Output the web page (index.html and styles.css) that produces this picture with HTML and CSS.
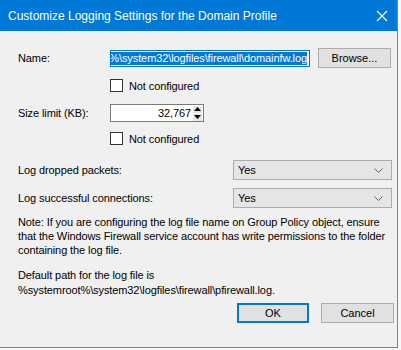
FILE: index.html
```html
<!DOCTYPE html>
<html lang="en">
<head>
    <meta charset="UTF-8">
    <meta name="viewport" content="width=device-width, initial-scale=1.0">
    <title>Customize Logging Settings</title>
    <link rel="stylesheet" href="styles.css">
</head>
<body>
    <div class="janela">
        <header class="titulo">
            <span>Customize Logging Settings for the Domain Profile</span>
            <svg class="fechar" width="12" height="12" viewBox="0 0 12 12">
                <path d="M1 1L11 11M11 1L1 11" stroke="#fff" stroke-width="1.2" fill="none"/>
            </svg>
        </header>
        <main class="conteudo">
            <div class="linha linha-nome">
                <label class="rotulo">Name:</label>
                <div class="caixa-texto focada">
                    <span class="selecao">%systemroot%\system32\logfiles\firewall\domainfw.log</span>
                </div>
                <button class="botao botao-procurar">Browse...</button>
            </div>
            <label class="marcar"><span class="quadrado"></span>Not configured</label>

            <div class="linha linha-tamanho">
                <label class="rotulo">Size limit (KB):</label>
                <div class="caixa-texto spin">
                    <span class="valor">32,767</span>
                    <div class="setas">
                        <span class="seta"><svg width="7" height="4" viewBox="0 0 7 4"><path d="M0 4L3.5 0L7 4Z" fill="#000"/></svg></span>
                        <span class="seta"><svg width="7" height="4" viewBox="0 0 7 4"><path d="M0 0L3.5 4L7 0Z" fill="#000"/></svg></span>
                    </div>
                </div>
            </div>
            <label class="marcar marcar-2"><span class="quadrado"></span>Not configured</label>

            <div class="linha linha-combo">
                <label class="rotulo rotulo-largo">Log dropped packets:</label>
                <div class="combo">Yes
                    <svg class="chevron" width="9" height="5" viewBox="0 0 9 5"><path d="M0.5 0.5L4.5 4.5L8.5 0.5" stroke="#666" fill="none"/></svg>
                </div>
            </div>
            <div class="linha linha-combo linha-combo-2">
                <label class="rotulo rotulo-largo">Log successful connections:</label>
                <div class="combo">Yes
                    <svg class="chevron" width="9" height="5" viewBox="0 0 9 5"><path d="M0.5 0.5L4.5 4.5L8.5 0.5" stroke="#666" fill="none"/></svg>
                </div>
            </div>

            <p class="nota">Note: If you are configuring the log file name on Group Policy object, ensure<br>that the Windows Firewall service account has write permissions to the folder<br>containing the log file.</p>
            <p class="nota nota-2">Default path for the log file is<br>%systemroot%\system32\logfiles\firewall\pfirewall.log.</p>

            <div class="acoes">
                <button class="botao botao-ok">OK</button>
                <button class="botao">Cancel</button>
            </div>
        </main>
    </div>
</body>
</html>
```

FILE: styles.css
```css
*{
    margin: 0;
    box-sizing: border-box;
}
:root{
    --azul:#0078d7;
    --fundo:#f0f0f0;
    --borda:#adadad;
}
body{
    background-color: #f7f7f7;
    font-family: "Liberation Sans", Arial, sans-serif;
    font-size: 12px;
    color: #000;
}
.janela{
    width: 398px;
    height: 348px;
    background-color: var(--fundo);
    border-right: 1px solid #4a8fc9;
    border-bottom: 1px solid #4a8fc9;
    display: flex;
    flex-direction: column;
}
.titulo{
    height: 31px;
    flex: none;
    background-color: var(--azul);
    color: #fff;
    display: flex;
    align-items: center;
    justify-content: space-between;
    padding: 0 9px 0 8px;
}
.conteudo{
    padding: 17px 0 0 18px;
    display: flex;
    flex-direction: column;
    font-size: 11px;
    letter-spacing: -0.1px;
    overflow: hidden;
}
.linha{
    display: flex;
    align-items: center;
}
.rotulo{
    width: 92px;
    flex: none;
}
.rotulo-largo{
    width: 215px;
}
.caixa-texto{
    background-color: #fff;
    border: 1px solid #7a7a7a;
    display: flex;
    align-items: center;
    overflow: hidden;
    flex: none;
}
.focada{
    width: 200px;
    height: 17px;
    border-color: var(--azul);
    justify-content: flex-end;
    padding: 1px 2px 1px 1px;
}
.selecao{
    background-color: var(--azul);
    color: #fff;
    white-space: nowrap;
    line-height: 13px;
}
.linha-nome{
    height: 20px;
}
.botao{
    font: inherit;
    color: #000;
    background-color: #e1e1e1;
    border: 1px solid var(--borda);
    width: 73px;
    height: 20px;
    padding: 0;
    flex: none;
}
.botao-procurar{
    margin-left: 8px;
}
.marcar{
    display: flex;
    align-items: center;
    gap: 6px;
    margin: 11px 0 0 92px;
    height: 13px;
}
.quadrado{
    width: 13px;
    height: 13px;
    background-color: #fff;
    border: 1px solid #333;
}
.linha-tamanho{
    margin-top: 12px;
}
.spin{
    width: 94px;
    height: 18px;
    justify-content: flex-end;
    padding-right: 1px;
}
.valor{
    margin-right: 2px;
}
.setas{
    display: flex;
    flex-direction: column;
    gap: 1px;
    height: 16px;
    justify-content: center;
}
.seta{
    width: 9px;
    height: 7px;
    background-color: #e5e5e5;
    display: flex;
    align-items: center;
    justify-content: center;
}
.marcar-2{
    margin-top: 10px;
}
.linha-combo{
    margin-top: 15px;
}
.linha-combo-2{
    margin-top: 8px;
}
.combo{
    width: 159px;
    height: 20px;
    background-color: #e5e5e5;
    border: 1px solid #acacac;
    display: flex;
    align-items: center;
    justify-content: space-between;
    padding: 0 8px 0 4px;
}
.nota{
    margin-top: 7px;
    line-height: 14px;
    white-space: nowrap;
}
.nota-2{
    margin-top: 11px;
    line-height: 15px;
}
.acoes{
    display: flex;
    gap: 12px;
    margin: 5px 0 0 219px;
}
.botao-ok{
    width: 72px;
    border: 1px solid var(--azul);
    box-shadow: inset 0 0 0 1px var(--azul);
}
```
